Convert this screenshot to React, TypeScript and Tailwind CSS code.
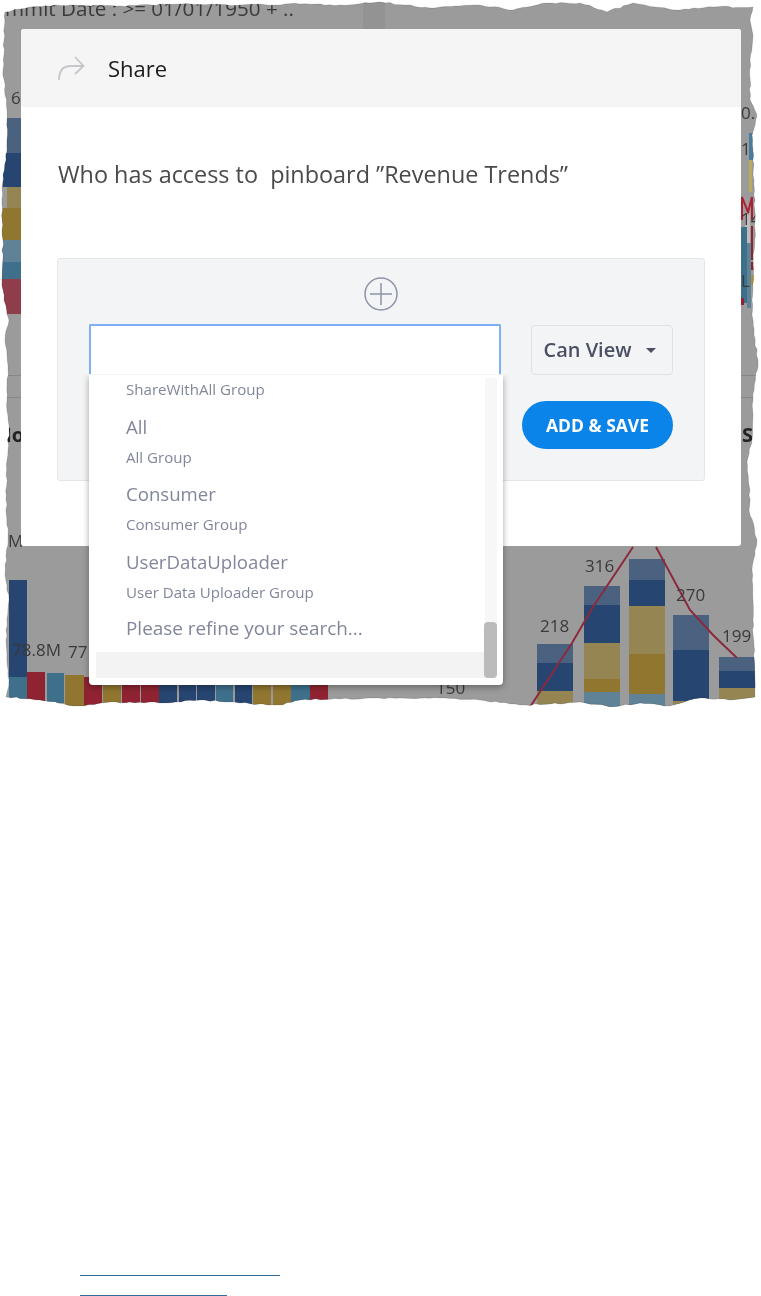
const edge: [number, number][] = [
  [5, 12], [30, 7], [70, 5], [120, 6], [180, 4], [240, 5], [300, 4], [340, 5], [380, 2], [405, 5], [430, 8], [455, 6], [480, 5], [513, 10], [547, 3], [580, 3], [607, 12], [633, 3], [655, 7], [680, 10], [713, 7], [753, 7],
  [750, 20], [753, 35], [750, 60], [750, 100], [757, 115], [752, 135], [754, 180], [755, 230], [752, 300], [752, 315], [754, 335], [758, 360], [753, 400], [752, 440], [747, 462], [750, 490], [749, 510], [757, 540], [752, 570], [753, 620], [755, 680], [755, 697],
  [730, 700], [700, 698], [670, 706], [640, 703], [610, 707], [580, 702], [550, 704], [520, 705], [480, 700], [440, 698], [400, 698], [340, 699], [300, 700], [278, 705], [240, 703], [200, 700], [160, 703], [110, 702], [78, 706], [40, 700], [6, 697],
  [9, 680], [6, 640], [9, 600], [5, 575], [8, 540], [6, 500], [7, 460], [9, 430], [7, 400], [8, 370], [5, 340], [9, 320], [4, 300], [2, 280], [3, 240], [2, 205], [3, 175], [7, 150], [7, 110], [3, 70], [4, 40],
];

function jagged(points: [number, number][]) {
  let seed = 7;
  const rnd = () => {
    seed = (seed * 16807) % 2147483647;
    return seed / 2147483647 - 0.5;
  };
  const out: string[] = [];
  points.forEach((p, i) => {
    const q = points[(i + 1) % points.length];
    const steps = Math.max(1, Math.round(Math.hypot(q[0] - p[0], q[1] - p[1]) / 5));
    for (let s = 0; s < steps; s++) {
      const t = s / steps;
      out.push(`${(p[0] + (q[0] - p[0]) * t + (s ? rnd() * 1.6 : 0)).toFixed(1)},${(p[1] + (q[1] - p[1]) * t + (s ? rnd() * 1.6 : 0)).toFixed(1)}`);
    }
  });
  return `M${out.join("L")}Z`;
}

const tornPath = jagged(edge);

const B1 = "#4a6280", B2 = "#264570", G1 = "#948553", G2 = "#917630", T1 = "#5f8296", T2 = "#3e708c", R = "#8f2331", R1 = "#8f3d4a";

type Seg = [number, number, number, number, string];

const segs: Seg[] = [
  [7, 118, 15, 35, B1], [3, 153, 19, 34, B2], [7, 187, 15, 21, G1], [2, 208, 20, 32, G2], [2, 240, 20, 22, T1], [2, 262, 20, 17, T2], [2, 279, 20, 35, R1],
  [9, 580, 18, 97, B2], [9, 677, 18, 24, T2], [27, 672, 18, 30, R], [47, 673, 17, 30, T2], [65, 675, 19, 32, G2], [84, 677, 18, 30, R], [103, 685, 18, 22, G2], [122, 685, 18, 22, R], [141, 685, 18, 22, R], [159, 685, 18, 22, B2], [179, 685, 17, 22, B2], [197, 685, 18, 22, B2], [216, 685, 17, 22, T2], [235, 685, 17, 22, B2], [253, 685, 18, 22, G2], [273, 685, 18, 22, G2], [291, 685, 19, 22, T2], [310, 685, 18, 22, R],
  [537, 644, 36, 19, B1], [537, 663, 36, 28, B2], [537, 691, 36, 16, G1],
  [584, 586, 36, 19, B1], [584, 605, 36, 38, B2], [584, 643, 36, 36, G1], [584, 679, 36, 13, G2], [584, 692, 36, 15, T1],
  [629, 559, 36, 21, B1], [629, 580, 36, 26, B2], [629, 606, 36, 48, G1], [629, 654, 36, 40, G2], [629, 694, 36, 13, T1],
  [673, 615, 36, 35, B1], [673, 650, 36, 51, B2], [673, 701, 36, 6, G1],
  [719, 657, 36, 14, B1], [719, 671, 36, 17, B2], [719, 688, 36, 19, G1],
  [749, 133, 6, 27, "#4a7ca0"], [749, 160, 3, 32, "#b8a860"], [745, 213, 5, 30, "#bdbdbd"], [741, 227, 6, 76, T2], [747, 243, 4, 65, T1], [751, 226, 2, 34, R], [751, 262, 3, 8, R], [751, 275, 3, 10, "#a8923c"], [741, 298, 3, 7, R],
];

const labels: [string, number, number][] = [
  ["218", 540, 632], ["316", 585, 572], ["270", 676, 601], ["199", 722, 642], ["78.8M", 12, 656], ["77", 68, 658], ["M", 8, 547], ["6", 11, 104], ["150", 436, 694], ["0..", 741, 119], ["1", 741, 155], ["14", 741, 225], ["L", 741, 287],
];

function Backdrop() {
  return (
    <svg className="absolute left-0 top-0" width="761" height="707" viewBox="0 0 761 707">
      <defs>
        <clipPath id="torn">
          <path d={tornPath} />
        </clipPath>
      </defs>
      <g clipPath="url(#torn)">
        <rect width="761" height="707" fill="#9b9b9b" />
        <rect x="363" y="0" width="22" height="29" fill="#939393" />
        <rect x="0" y="375" width="761" height="1" fill="#868686" />
        <rect x="0" y="397" width="761" height="1" fill="#868686" />
        {segs.map(([x, y, w, h, c], i) => (
          <rect key={i} x={x} y={y} width={w} height={h} fill={c} />
        ))}
        <polyline points="530,707 572,643 593,607 633,547" fill="none" stroke="#8a2a3c" strokeWidth="2" />
        <polyline points="656,547 690,610 713,635 737,658" fill="none" stroke="#8a2a3c" strokeWidth="2" />
        <polyline points="742,220 742,197 748,212 752,197 752,220" fill="none" stroke="#a82232" strokeWidth="2" />
        <text x="5" y="16" fontSize="20.6" fill="#3a3a3a" fontFamily="'Open Sans', sans-serif">mmit Date : &gt;= 01/01/1950 + ..</text>
        <text x="-7" y="442" fontSize="20" fontWeight="700" fill="#222" fontFamily="'Open Sans', sans-serif">Mo</text>
        <text x="742" y="442" fontSize="20" fontWeight="700" fill="#222" fontFamily="'Open Sans', sans-serif">S</text>
        {labels.map(([t, x, y]) => (
          <text key={t + x} x={x} y={y} fontSize="17" fill="#3a3a3a" fontFamily="'Open Sans', sans-serif">{t}</text>
        ))}
      </g>
      <path d={tornPath} fill="none" stroke="#000" strokeOpacity="0.12" strokeWidth="1" />
    </svg>
  );
}

function Row({ title, sub }: { title: string; sub: string }) {
  return (
    <div className="pt-[6.5px]">
      <div className="h-[25px] text-[18.6px] leading-[25px]">{title}</div>
      <div className="h-[36px] text-[15.1px] leading-[36px]">{sub}</div>
    </div>
  );
}

export default function App() {
  return (
    <div className="min-h-[1296px] w-[761px] overflow-hidden bg-white font-['Open_Sans',sans-serif]">
      <div className="relative h-[707px] blur-[0.6px]">
        <Backdrop />
        <div className="absolute left-[21px] top-[29px] h-[517px] w-[720px] rounded-[3px] bg-white">
          <div className="flex h-[78px] items-center rounded-t-[3px] bg-[#f5f5f6] pl-[36px]">
            <svg width="28" height="26" viewBox="0 0 28 26" fill="none" stroke="#c4c6c9" strokeWidth="1.8">
              <path d="M2 25 C2 14 7 11 14 11 H26" />
              <path d="M18 2 L26.5 11 L18 19" />
            </svg>
            <span className="ml-[23px] text-[22px] text-[#1c1c1c]">Share</span>
          </div>
          <p className="ml-[37px] mt-[50px] whitespace-pre text-[23.4px] leading-[34px] text-[#4a4a4a]">Who has access to  pinboard ”Revenue Trends”</p>
          <div className="ml-[36px] mt-[67px] h-[223px] w-[648px] rounded-[3px] border border-[#e4e6ea] bg-[#f3f4f6]">
            <div className="flex justify-center pt-[18px]">
              <svg width="34" height="34" viewBox="0 0 34 34" fill="none" stroke="#8d93a8" strokeWidth="1.5">
                <circle cx="17" cy="17" r="16" />
                <path d="M17 6 V28 M6 17 H28" />
              </svg>
            </div>
            <div className="mt-[13px] flex items-start">
              <div className="ml-[31px] h-[50px] w-[412px] rounded-t-[2px] border-2 border-b-0 border-[#7fb0f5] bg-white" />
              <div className="ml-[30px] mt-[1px] flex h-[50px] w-[142px] items-center justify-center gap-[14px] rounded-[4px] border border-[#dfe1e6] bg-[#f3f4f6] pr-[5px] text-[20px] font-semibold text-[#4a4f63]">
                Can View
                <span className="h-0 w-0 border-x-[5px] border-t-[5px] border-x-transparent border-t-[#4a4f63]" />
              </div>
            </div>
            <button className="ml-[464px] mt-[26px] flex h-[48px] w-[151px] items-center justify-center rounded-full bg-[#0a84e8] text-[17.5px] font-bold text-white">ADD &amp; SAVE</button>
          </div>
        </div>
        <div className="absolute left-[89px] top-[375px] h-[310px] w-[414px] rounded-b-[4px] bg-white pl-[37px] text-[#81869c] shadow-[0_2px_6px_rgba(0,0,0,0.35)] [clip-path:inset(0_-10px_-10px_-10px)]">
          <div className="-mt-[4px]">
            <div className="h-[36px] text-[15.1px] leading-[36px]">ShareWithAll Group</div>
            <Row title="All" sub="All Group" />
            <Row title="Consumer" sub="Consumer Group" />
            <Row title="UserDataUploader" sub="User Data Uploader Group" />
            <div className="h-[36px] text-[18.9px] leading-[36px]">Please refine your search...</div>
          </div>
          <div className="absolute bottom-[7px] left-[7px] h-[26px] w-[389px] bg-[#f3f3f3]" />
          <div className="absolute bottom-[7px] right-[6px] h-[300px] w-[12px] bg-[#f7f7f7]" />
          <div className="absolute bottom-[7px] right-[6px] h-[56px] w-[13px] rounded-[4px] bg-[#bbbbbb]" />
        </div>
      </div>
      <div className="ml-[80px] mt-[568px] h-[1px] w-[200px] bg-[#336b99]" />
      <div className="ml-[80px] mt-[19px] h-[1px] w-[147px] bg-[#336b99]" />
    </div>
  );
}
